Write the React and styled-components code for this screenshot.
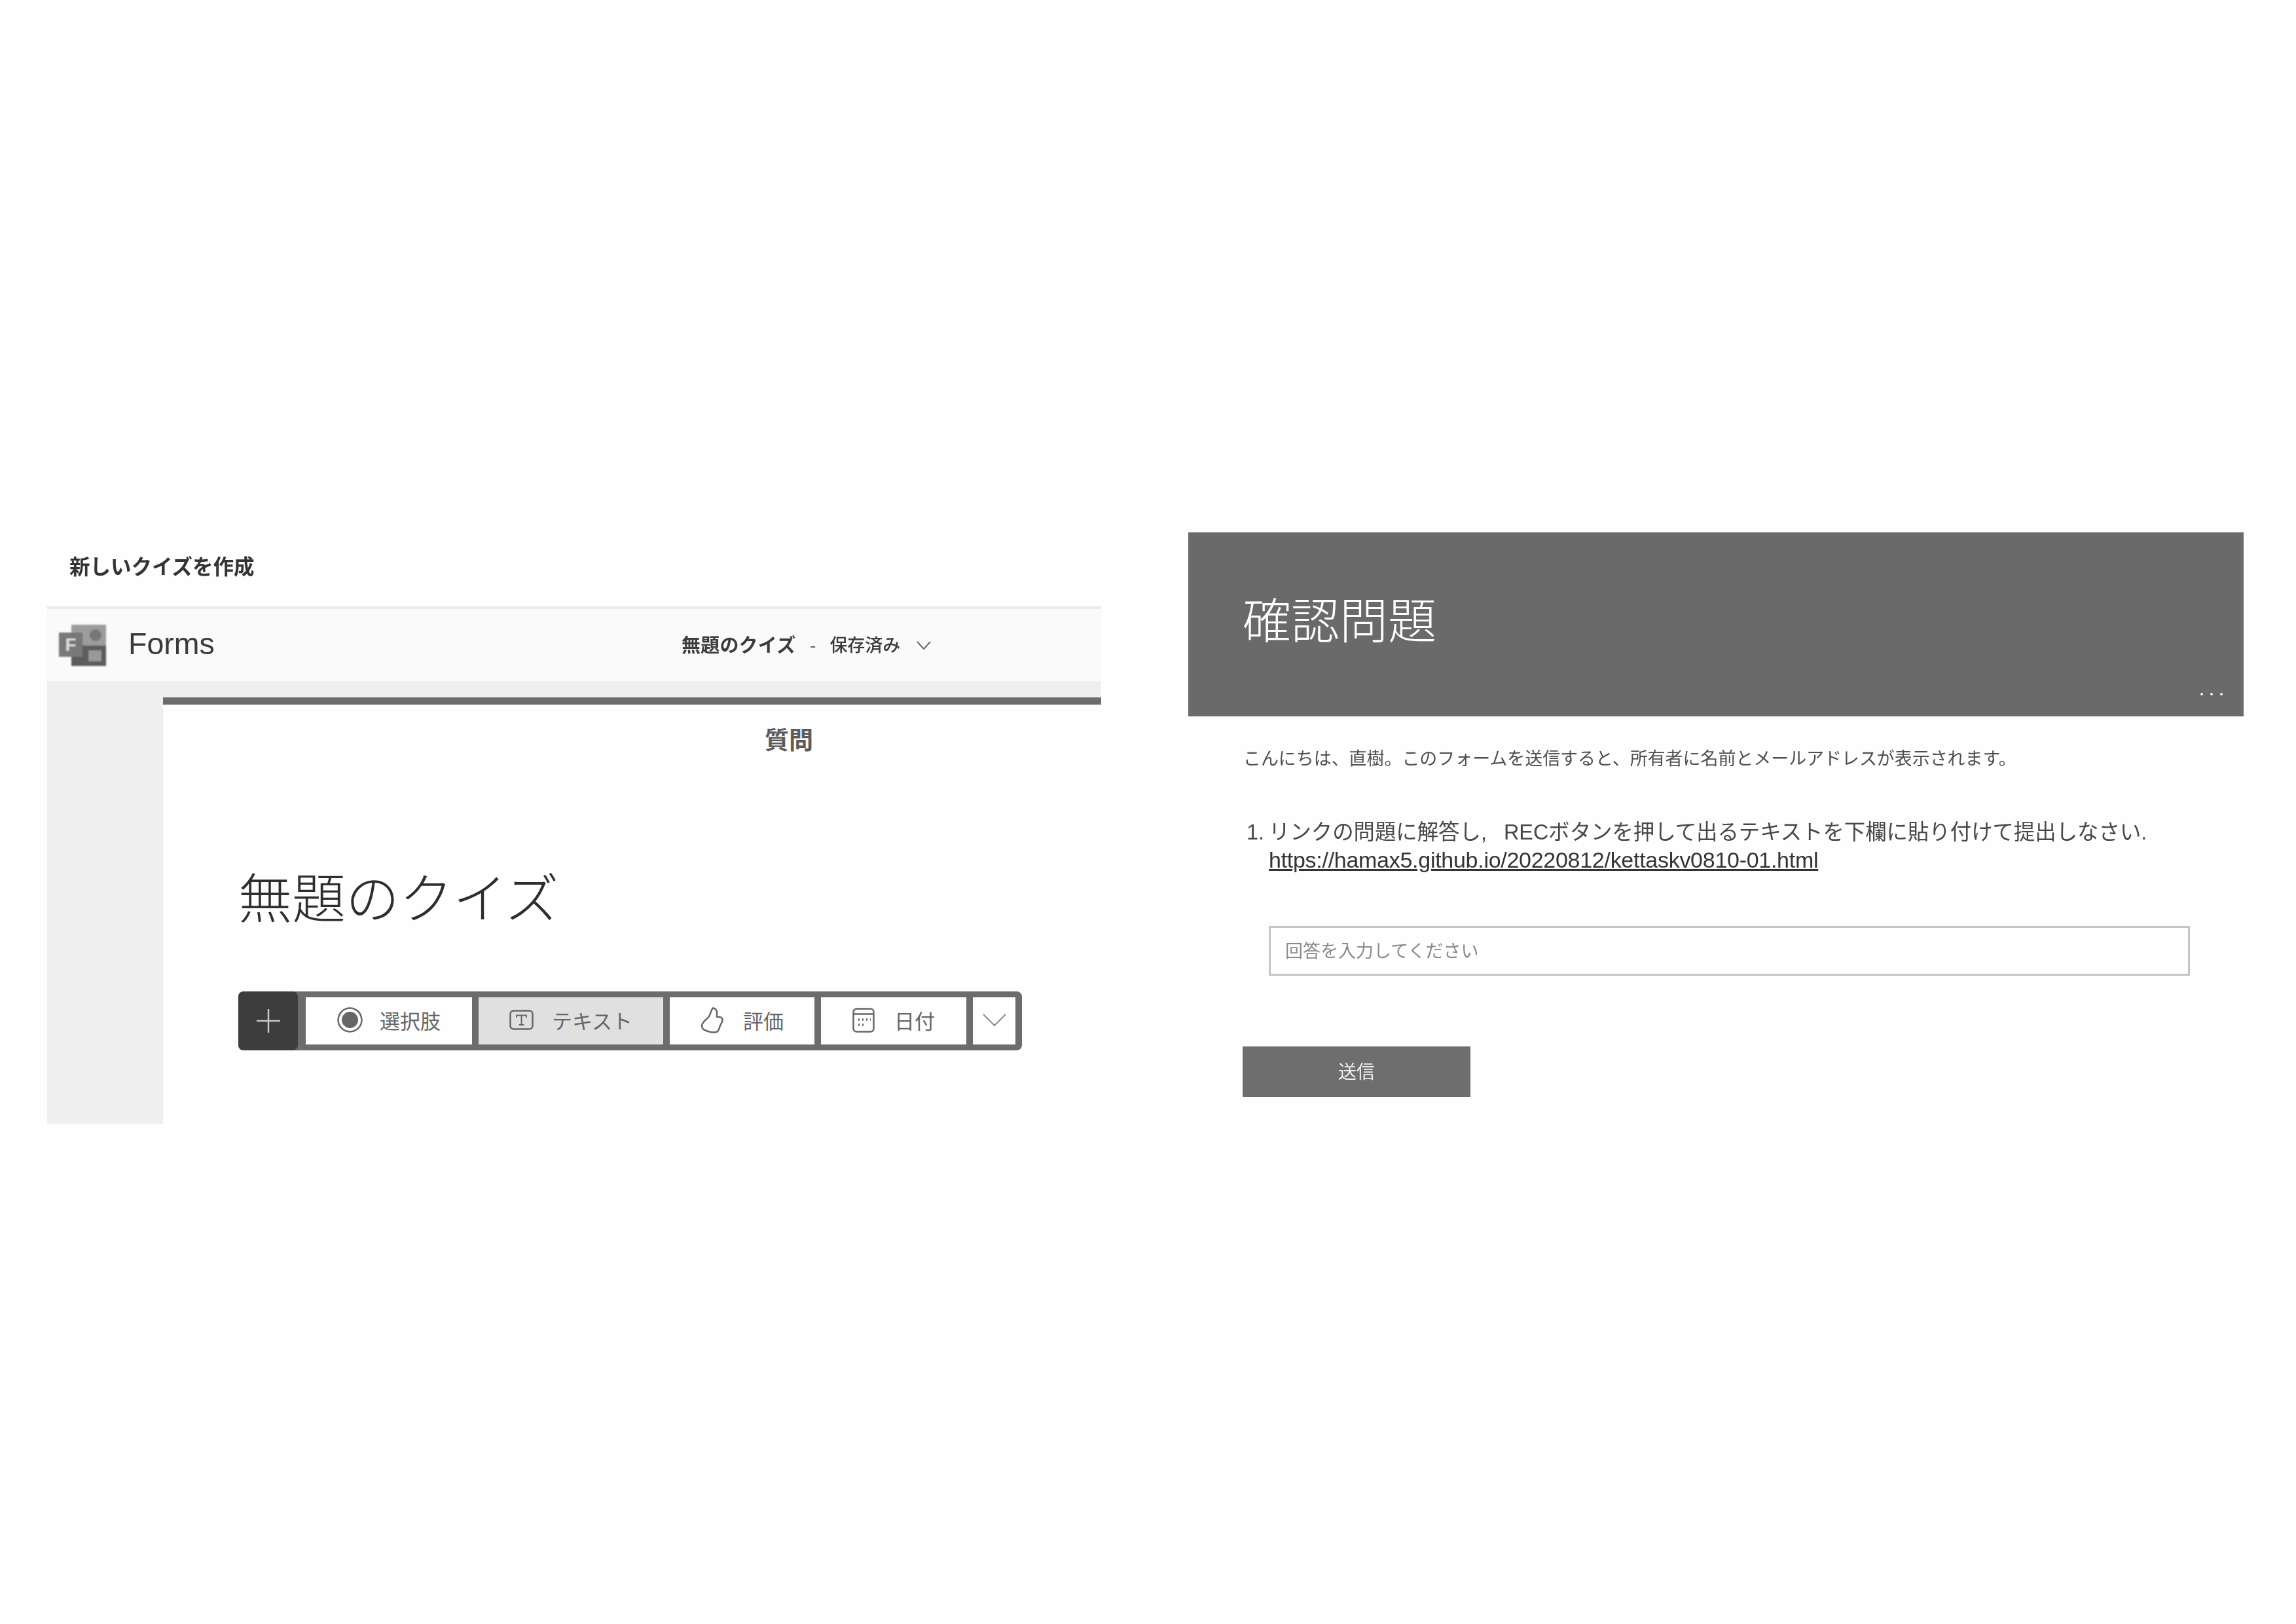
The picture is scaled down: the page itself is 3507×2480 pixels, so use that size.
import React from "react";
import styled, { createGlobalStyle } from "styled-components";

const GlobalStyle = createGlobalStyle`
  html, body {
    margin: 0;
    padding: 0;
    background: #fefefe;
  }
  body {
    font-family: "Noto Sans CJK JP", "Liberation Sans", sans-serif;
  }
`;

const Page = styled.div`
  width: 3507px;
  height: 2480px;
  box-sizing: border-box;
  padding: 813px 80px 0 72px;
  display: grid;
  grid-template-columns: 1610px 1612px;
  column-gap: 133px;
  align-items: start;
  filter: blur(0.7px);
`;

const Column = styled.div`
  display: flex;
  flex-direction: column;
`;

/* left screenshot */
const Caption = styled.div`
  height: 113px;
  box-sizing: border-box;
  padding: 0 0 13px 34px;
  display: flex;
  align-items: center;
  font-size: 31.5px;
  font-weight: 700;
  color: #333;
`;

const AppBar = styled.div`
  height: 114px;
  box-sizing: border-box;
  border-top: 4px solid #ebebeb;
  background: #fafafa;
  padding: 0 0 4px 18px;
  display: flex;
  align-items: center;
`;

const Logo = styled.svg`
  width: 72px;
  height: 63px;
  margin-top: 4px;
  filter: blur(0.8px);
`;

const AppName = styled.span`
  margin-left: 34px;
  width: 131px;
  font-family: "Liberation Sans", sans-serif;
  font-size: 46.5px;
  color: #3a3a3a;
`;

const QuizName = styled.span`
  margin-left: 714px;
  font-size: 29px;
  font-weight: 700;
  letter-spacing: 0.2px;
  color: #3c3c3c;
`;

const Dash = styled.span`
  margin: 0 21px 0 22px;
  font-size: 26px;
  color: #555;
`;

const SavedState = styled.span`
  font-size: 27px;
  font-weight: 500;
  color: #3c3c3c;
`;

const SmallChevron = styled.svg`
  margin: 4px 0 0 25px;
  width: 22px;
  height: 13px;
  fill: none;
  stroke: #666;
  stroke-width: 2;
`;

const Workspace = styled.div`
  height: 676px;
  display: flex;
  background: #efefef;
`;

const SideRail = styled.div`
  width: 177px;
  flex: none;
`;

const Sheet = styled.div`
  flex: 1;
  margin-top: 25px;
  border-top: 11px solid #6c6c6c;
  background: #fefefe;
`;

const SheetTab = styled.div`
  margin: 30px 0 0 919px;
  font-size: 37px;
  line-height: 44px;
  font-weight: 700;
  color: #5c5c5c;
`;

const QuizTitle = styled.div`
  margin: 167px 0 0 115px;
  font-size: 82px;
  line-height: 100px;
  font-weight: 300;
  color: #2e2e2e;
`;

const Toolbar = styled.div`
  margin: 97px 0 0 115px;
  width: 1197px;
  height: 90px;
  display: flex;
  align-items: stretch;
  border-radius: 8px;
  background: #6c6c6c;
`;

const PlusButton = styled.div`
  width: 91px;
  flex: none;
  display: flex;
  align-items: center;
  justify-content: center;
  border-radius: 8px;
  background: #3d3d3d;
`;

const PlusIcon = styled.svg`
  width: 36px;
  height: 36px;
  stroke: #c8c8c8;
  stroke-width: 2.5;
`;

const Options = styled.div`
  flex: 1;
  display: flex;
  gap: 10px;
  padding: 9px 10px 9px 12px;
`;

const Option = styled.div`
  width: ${(p) => p.$width}px;
  flex: none;
  box-sizing: border-box;
  padding-bottom: 3px;
  display: flex;
  align-items: center;
  justify-content: center;
  gap: ${(p) => p.$gap || 28}px;
  background: ${(p) => (p.$active ? "#e0e0e0" : "#fefefe")};
  font-size: 31px;
  color: #666;
`;

const OptionIcon = styled.svg`
  width: ${(p) => p.$w}px;
  height: ${(p) => p.$h}px;
  flex: none;
  fill: none;
  stroke: #666;
  stroke-width: 2.5;
`;

const MoreIcon = styled.svg`
  width: 36px;
  height: 20px;
  fill: none;
  stroke: #8c8c8c;
  stroke-width: 2;
`;

/* right screenshot */
const Banner = styled.div`
  position: relative;
  height: 281px;
  box-sizing: border-box;
  padding: 85px 0 0 83px;
  background: #6a6a6a;
  font-size: 74px;
  line-height: 90px;
  font-weight: 300;
  color: #fff;
`;

const MoreDots = styled.div`
  position: absolute;
  right: 32px;
  bottom: 32px;
  display: flex;
  gap: 11px;
`;

const Dot = styled.i`
  width: 4px;
  height: 4px;
  border-radius: 50%;
  background: #f2f2f2;
`;

const FormBody = styled.div`
  padding-left: 84px;
  display: flex;
  flex-direction: column;
  align-items: flex-start;
`;

const Greeting = styled.div`
  margin-top: 43px;
  font-size: 26.95px;
  line-height: 40px;
  color: #4f4f4f;
  white-space: nowrap;
`;

const Question = styled.div`
  margin: 73px 0 0 5px;
  display: flex;
  font-family: "Liberation Sans", "Noto Sans CJK JP", sans-serif;
  font-size: 32.4px;
  line-height: 42px;
  color: #484848;
  white-space: nowrap;
`;

const QuestionNumber = styled.span`
  width: 34px;
  flex: none;
`;

const QuestionText = styled.div`
  word-spacing: 17px;
`;

const QuestionLink = styled.a`
  display: block;
  font-size: 34px;
  letter-spacing: -0.28px;
  word-spacing: 0;
  color: #333;
  text-decoration: underline;
`;

const AnswerBox = styled.div`
  margin: 80px 0 0 39px;
  width: 1407px;
  height: 76px;
  box-sizing: border-box;
  border: 3px solid #c4c4c4;
  padding: 0 0 4px 22px;
  display: flex;
  align-items: center;
  font-size: 27px;
  color: #8a8a8a;
`;

const SubmitButton = styled.div`
  margin: 108px 0 0 -1px;
  width: 348px;
  height: 77px;
  box-sizing: border-box;
  padding-bottom: 4px;
  display: flex;
  align-items: center;
  justify-content: center;
  background: #6e6e6e;
  font-size: 28px;
  color: #eee;
`;

const options = [
  {
    label: "選択肢",
    width: 254,
    w: 39,
    h: 39,
    gap: 26,
    icon: (
      <>
        <circle cx="19.5" cy="19.5" r="18" />
        <circle cx="19.5" cy="19.5" r="12.5" fill="#666" stroke="none" />
      </>
    ),
  },
  {
    label: "テキスト",
    width: 282,
    active: true,
    w: 37,
    h: 31,
    icon: (
      <>
        <rect x="1.5" y="1.5" width="34" height="28" rx="5" />
        <path d="M11 12V8.5H26V12M18.5 8.5V23M15 23H22" strokeWidth="2" />
      </>
    ),
  },
  {
    label: "評価",
    width: 221,
    gap: 29,
    w: 36,
    h: 40,
    icon: (
      <path d="M19 1.5C15 5 16 11 12 15.5C8 20 2 23 2 29C2 33 5 35 10 36.5C14 38 20 39 24 38C27 37 28.5 34 29 31C30 27 33 24 33.5 20C34 16 30 14.5 26 15C25 15 24.5 14 25 12C26 7 23.5 1 19 1.5Z" />
    ),
  },
  {
    label: "日付",
    width: 222,
    gap: 30,
    w: 34,
    h: 38,
    icon: (
      <>
        <rect x="1.5" y="1.5" width="31" height="35" rx="5" />
        <path d="M2 9.5H32" />
        <path
          d="M9 18H11M15 18H17M21 18H23M27 18H28M9 26H11M15 26H17"
          strokeWidth="3.5"
        />
      </>
    ),
  },
];

const App = () => {
  return (
    <>
      <GlobalStyle />
      <Page>
        <Column>
          <Caption>新しいクイズを作成</Caption>
          <AppBar>
            <Logo viewBox="0 0 72 63">
              <rect x="19" y="0" width="53" height="32" fill="#9c9c9c" />
              <circle cx="56" cy="16" r="9" fill="#777" />
              <rect x="19" y="32" width="53" height="31" fill="#5c5c5c" />
              <rect x="45" y="39" width="20" height="17" fill="#999" />
              <rect x="0" y="12" width="36" height="37" fill="#787878" />
              <text
                x="18"
                y="40"
                textAnchor="middle"
                fontSize="28"
                fontWeight="700"
                fontFamily="Liberation Sans"
                fill="#e4e4e4"
              >
                F
              </text>
            </Logo>
            <AppName>Forms</AppName>
            <QuizName>無題のクイズ</QuizName>
            <Dash>-</Dash>
            <SavedState>保存済み</SavedState>
            <SmallChevron viewBox="0 0 22 13">
              <path d="M1 1L11 12L21 1" />
            </SmallChevron>
          </AppBar>
          <Workspace>
            <SideRail />
            <Sheet>
              <SheetTab>質問</SheetTab>
              <QuizTitle>無題のクイズ</QuizTitle>
              <Toolbar>
                <PlusButton>
                  <PlusIcon viewBox="0 0 36 36">
                    <path d="M18 0V36M0 18H36" />
                  </PlusIcon>
                </PlusButton>
                <Options>
                  {options.map((opt) => (
                    <Option
                      key={opt.label}
                      $width={opt.width}
                      $active={opt.active}
                      $gap={opt.gap}
                    >
                      <OptionIcon $w={opt.w} $h={opt.h} viewBox={`0 0 ${opt.w} ${opt.h}`}>
                        {opt.icon}
                      </OptionIcon>
                      {opt.label}
                    </Option>
                  ))}
                  <Option $width={65}>
                    <MoreIcon viewBox="0 0 36 20">
                      <path d="M1 1L18 18L35 1" />
                    </MoreIcon>
                  </Option>
                </Options>
              </Toolbar>
            </Sheet>
          </Workspace>
        </Column>

        <Column>
          <Banner>
            確認問題
            <MoreDots>
              <Dot />
              <Dot />
              <Dot />
            </MoreDots>
          </Banner>
          <FormBody>
            <Greeting>
              こんにちは、直樹。このフォームを送信すると、所有者に名前とメールアドレスが表示されます。
            </Greeting>
            <Question>
              <QuestionNumber>1.</QuestionNumber>
              <QuestionText>
                リンクの問題に解答し, RECボタンを押して出るテキストを下欄に貼り付けて提出しなさい.
                <QuestionLink>https://hamax5.github.io/20220812/kettaskv0810-01.html</QuestionLink>
              </QuestionText>
            </Question>
            <AnswerBox>回答を入力してください</AnswerBox>
            <SubmitButton>送信</SubmitButton>
          </FormBody>
        </Column>
      </Page>
    </>
  );
};

export default App;
